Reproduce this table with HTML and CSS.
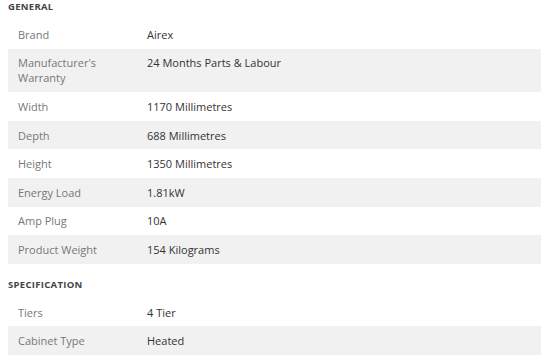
FILE: index.html
```html
<!DOCTYPE html>
<html>
<head>
<meta charset="utf-8">
<link rel="stylesheet" href="styles.css">
</head>
<body>
<section class="group">
  <h3 class="group-title">General</h3>
  <div class="specs">
    <div class="row"><div class="label">Brand</div><div class="value">Airex</div></div>
    <div class="row alt"><div class="label">Manufacturer's<br>Warranty</div><div class="value">24 Months Parts &amp; Labour</div></div>
    <div class="row"><div class="label">Width</div><div class="value">1170 Millimetres</div></div>
    <div class="row alt"><div class="label">Depth</div><div class="value">688 Millimetres</div></div>
    <div class="row"><div class="label">Height</div><div class="value">1350 Millimetres</div></div>
    <div class="row alt"><div class="label">Energy Load</div><div class="value">1.81kW</div></div>
    <div class="row"><div class="label">Amp Plug</div><div class="value">10A</div></div>
    <div class="row alt"><div class="label">Product Weight</div><div class="value">154 Kilograms</div></div>
  </div>
</section>
<section class="group second">
  <h3 class="group-title">Specification</h3>
  <div class="specs">
    <div class="row"><div class="label">Tiers</div><div class="value">4 Tier</div></div>
    <div class="row alt"><div class="label">Cabinet Type</div><div class="value">Heated</div></div>
  </div>
</section>
</body>
</html>
```
FILE: styles.css
```css
html, body {
  margin: 0;
  padding: 0;
  background: #fff;
}
body {
  font-family: "Open Sans", "Liberation Sans", sans-serif;
  font-size: 11px;
  color: #333;
}
.group {
  padding-left: 8px;
}
.group.second {
  margin-top: 14px;
}
.group-title {
  margin: 0 0 6px;
  font-size: 9.5px;
  line-height: 14px;
  font-weight: 700;
  text-transform: uppercase;
  letter-spacing: 0.3px;
  color: #444;
}
.specs {
  display: flex;
  flex-direction: column;
}
.row {
  display: grid;
  grid-template-columns: 129px 1fr;
  padding: 6.8px 10px;
  line-height: 15px;
}
.row.alt {
  background: #f1f1f1;
}
.label {
  color: #777;
}
.value {
  color: #333;
}
```
